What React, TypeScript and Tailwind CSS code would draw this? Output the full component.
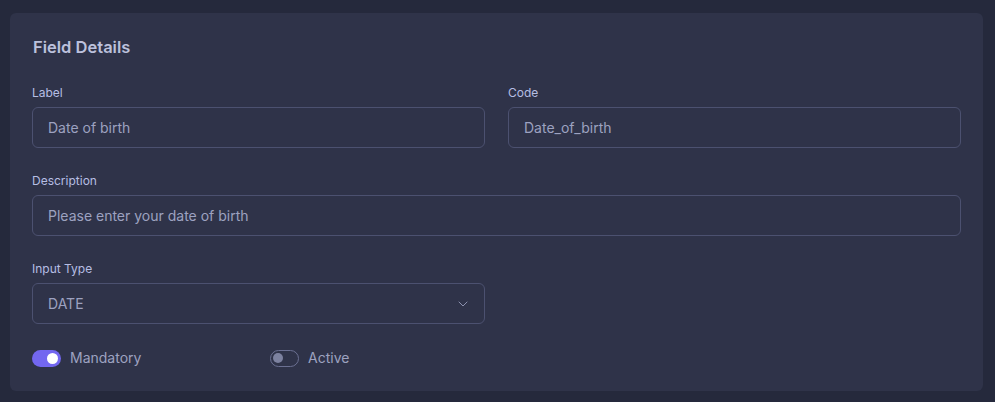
import { ChevronDown } from "lucide-react";

function Field({ label, value, className = "" }: { label: string; value: string; className?: string }) {
  return (
    <div className={className}>
      <label className="mb-1.5 block text-[12px] leading-4 text-[#b6bee3]">{label}</label>
      <div className="flex h-[41px] items-center rounded-md border border-[#4c5170] px-[15px] text-[14px] text-[#9da2c0]">
        {value}
      </div>
    </div>
  );
}

function Toggle({ on, label }: { on: boolean; label: string }) {
  return (
    <div className="flex items-center gap-[9px]">
      {on ? (
        <span className="flex h-[17px] w-[29px] items-center justify-end rounded-full bg-[#7367f0] px-[3px]">
          <span className="h-[11px] w-[11px] rounded-full bg-white" />
        </span>
      ) : (
        <span className="flex h-[17px] w-[29px] items-center rounded-full border border-[#6b7092] px-[2px]">
          <span className="h-[10px] w-[10px] rounded-full bg-[#7d82a0]" />
        </span>
      )}
      <span className="text-[14px] leading-5 text-[#9da2c0]">{label}</span>
    </div>
  );
}

export default function App() {
  return (
    <div className="min-h-screen bg-[#25293c] pl-[10px] pr-3 pt-[13px]" style={{ fontFamily: "Inter, 'Noto Sans', sans-serif" }}>
      <div className="rounded-md bg-[#2f3349] px-[22px] pb-[23px] pt-6">
        <h2 className="pl-px text-[16.5px] font-semibold leading-5 text-[#bcc1dc]">Field Details</h2>

        <div className="mt-7 grid grid-cols-2 gap-[23px]">
          <Field label="Label" value="Date of birth" />
          <Field label="Code" value="Date_of_birth" />
        </div>

        <Field className="mt-[25px]" label="Description" value="Please enter your date of birth" />

        <div className="mt-[25px] grid grid-cols-2 gap-[23px]">
          <div>
            <label className="mb-1.5 block text-[12px] leading-4 text-[#b6bee3]">Input Type</label>
            <div className="flex h-[41px] items-center justify-between rounded-md border border-[#4c5170] pl-[15px] pr-[13px] text-[14px] text-[#9da2c0]">
              DATE
              <ChevronDown className="h-4 w-4 text-[#8d92b0]" strokeWidth={1.5} />
            </div>
          </div>
        </div>

        <div className="mt-6 flex items-center">
          <div className="w-[238px]">
            <Toggle on label="Mandatory" />
          </div>
          <Toggle on={false} label="Active" />
        </div>
      </div>
    </div>
  );
}
